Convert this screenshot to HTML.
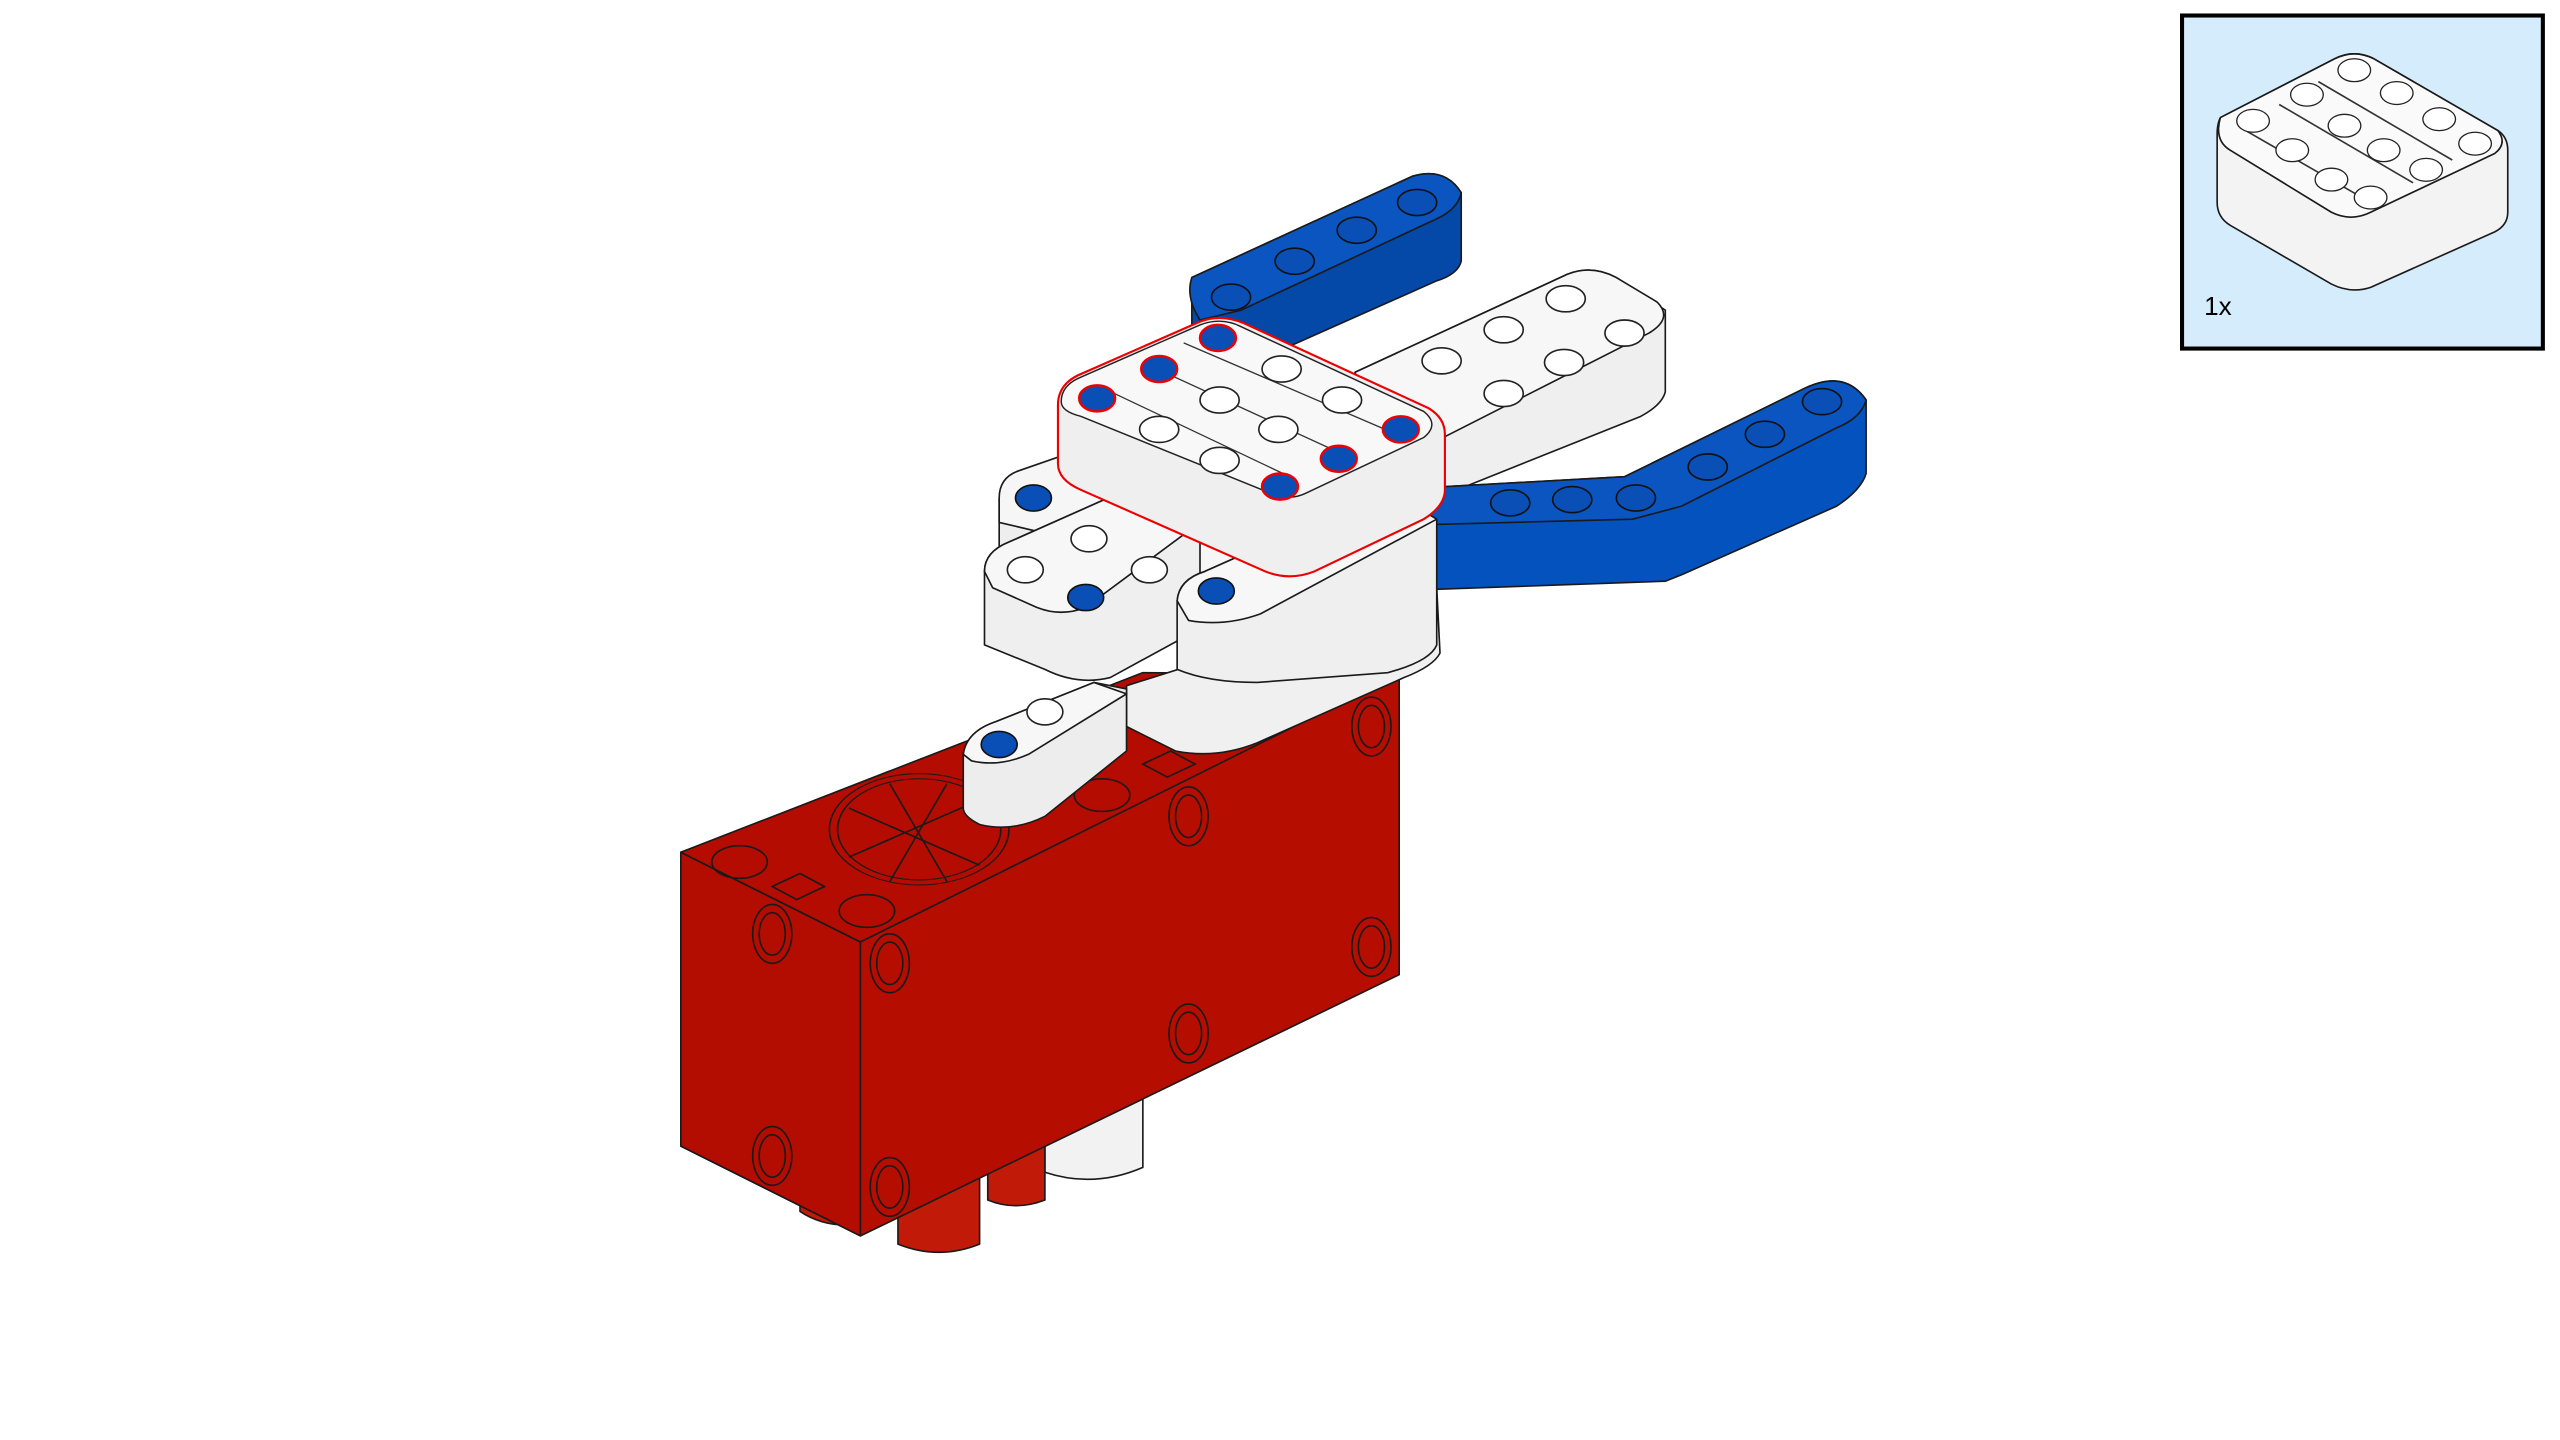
<!DOCTYPE html>
<html><head><meta charset="utf-8"><style>
html,body{margin:0;padding:0;background:#fff;width:2560px;height:1440px;overflow:hidden}
svg{display:block}
.o{stroke:#1a1a1a;stroke-width:1;stroke-linejoin:round}
</style></head><body>
<svg width="2560" height="1440" viewBox="0 0 1568 882" xmlns="http://www.w3.org/2000/svg">
<rect x="1336.5" y="9.5" width="221" height="204" fill="#d5ecfc" stroke="#000" stroke-width="2.5"/>
<g class="o" stroke-width="0.8">
<path d="M1360,72 L1430,36 Q1442,30 1454,36 L1530,80 Q1536,84 1536,92 L1536,130 Q1536,138 1528,142 L1452,176 Q1440,180 1428,174 L1366,138 Q1358,133 1358,124 L1358,82 Q1358,76 1360,72Z" fill="#f3f3f3"/>
<path d="M1360,72 L1430,36 Q1442,30 1454,36 L1530,80 Q1536,88 1528,94 L1452,130 Q1440,136 1428,130 L1366,92 Q1356,86 1360,72Z" fill="#fafafa"/>
<line x1="1372" y1="78" x2="1452" y2="124" stroke="#333"/><line x1="1396" y1="64" x2="1478" y2="112" stroke="#333"/><line x1="1420" y1="50" x2="1502" y2="98" stroke="#333"/>
</g>
<g fill="#fff" stroke="#222" stroke-width="0.8">
<ellipse cx="1442" cy="43" rx="10" ry="7"/><ellipse cx="1413" cy="58" rx="10" ry="7"/><ellipse cx="1380" cy="74" rx="10" ry="7"/>
<ellipse cx="1468" cy="57" rx="10" ry="7"/><ellipse cx="1436" cy="77" rx="10" ry="7"/><ellipse cx="1404" cy="92" rx="10" ry="7"/>
<ellipse cx="1494" cy="73" rx="10" ry="7"/><ellipse cx="1460" cy="92" rx="10" ry="7"/><ellipse cx="1428" cy="110" rx="10" ry="7"/>
<ellipse cx="1516" cy="88" rx="10" ry="7"/><ellipse cx="1486" cy="104" rx="10" ry="7"/><ellipse cx="1452" cy="121" rx="10" ry="7"/>
</g>
<text x="1350" y="193" font-family="Liberation Sans, sans-serif" font-size="16" fill="#000">1x</text>

<g class="o">
<path d="M730,170 L865,108 Q885,102 895,118 L895,160 Q893,168 880,172 L790,212 L760,222 L730,208Z" fill="#0448a8"/>
<path d="M730,170 L865,108 Q885,102 895,118 Q893,128 880,134 L760,190 L735,196 Q726,182 730,170Z" fill="#0a55c0"/>
</g>
<g fill="#0a4fb5" stroke="#111" stroke-width="1"><ellipse cx="754" cy="182" rx="12" ry="8"/><ellipse cx="793" cy="160" rx="12" ry="8"/><ellipse cx="831" cy="141" rx="12" ry="8"/><ellipse cx="868" cy="124" rx="12" ry="8"/></g>

<g class="o">
<path d="M830,228 L960,168 Q975,162 990,170 L1020,190 L1020,240 Q1018,248 1005,255 L880,305 L840,300Z" fill="#efefef"/>
<path d="M830,228 L960,168 Q975,162 990,170 L1015,185 Q1025,195 1010,204 L880,270 L840,262Z" fill="#f7f7f7"/>
</g>
<g fill="#fff" stroke="#222" stroke-width="1"><ellipse cx="959" cy="183" rx="12" ry="8"/><ellipse cx="921" cy="202" rx="12" ry="8"/><ellipse cx="883" cy="221" rx="12" ry="8"/><ellipse cx="995" cy="204" rx="12" ry="8"/><ellipse cx="958" cy="222" rx="12" ry="8"/><ellipse cx="921" cy="241" rx="12" ry="8"/></g>

<g class="o">
<path d="M850,300 L995,292 L1105,238 Q1130,226 1143,245 L1143,290 Q1140,300 1125,310 L1030,352 L1020,356 L850,362Z" fill="#0452bd"/>
<path d="M850,300 L995,292 L1105,238 Q1130,226 1143,245 Q1140,256 1125,262 L1030,310 L1000,318 L850,322Z" fill="#0a55c0"/>
</g>
<g fill="#0a4fb5" stroke="#111" stroke-width="1"><ellipse cx="1116" cy="246" rx="12" ry="8"/><ellipse cx="1081" cy="266" rx="12" ry="8"/><ellipse cx="1046" cy="286" rx="12" ry="8"/><ellipse cx="1002" cy="305" rx="12" ry="8"/><ellipse cx="963" cy="306" rx="12" ry="8"/><ellipse cx="925" cy="308" rx="12" ry="8"/></g>

<!-- pegs (behind block) -->
<g class="o">
<path d="M640,660 L700,652 L700,715 Q670,728 640,718Z" fill="#f2f2f2"/>
<path d="M550,715 L600,715 L600,762 Q575,772 550,762Z" fill="#c21a08"/>
<path d="M605,700 L640,692 L640,735 Q622,742 605,735Z" fill="#c21a08"/>
<path d="M490,720 L525,730 L525,750 Q505,752 490,742Z" fill="#c21a08"/>
</g>

<g class="o">
<path d="M417,522 L740,405 L857,413 L857,597 L527,757 L417,702Z" fill="#b50d00"/>
<path d="M417,522 L527,577 L527,757 L417,702Z" fill="#b30c00"/>
<path d="M417,522 L700,412 L857,413 L527,577Z" fill="#b40c00"/>
</g>
<g fill="none" stroke="#1a1a1a" stroke-width="1">
<circle cx="563" cy="508" r="55" transform="matrix(1,0,0,0.62,0,193)"/>
<circle cx="563" cy="508" r="50" transform="matrix(1,0,0,0.62,0,193)"/>
<path d="M520,495 L600,530 M520,525 L600,490 M545,480 L580,540 M545,540 L580,480"/>
<ellipse cx="453" cy="528" rx="17" ry="10"/><ellipse cx="531" cy="558" rx="17" ry="10"/><ellipse cx="675" cy="487" rx="17" ry="10"/>
<path d="M473,543 L490,535 L505,543 L488,551Z"/><path d="M700,468 L717,460 L732,468 L715,476Z"/>
<ellipse cx="473" cy="572" rx="12" ry="18"/><ellipse cx="473" cy="572" rx="8" ry="13"/>
<ellipse cx="545" cy="590" rx="12" ry="18"/><ellipse cx="545" cy="590" rx="8" ry="13"/>
<ellipse cx="473" cy="708" rx="12" ry="18"/><ellipse cx="473" cy="708" rx="8" ry="13"/>
<ellipse cx="545" cy="727" rx="12" ry="18"/><ellipse cx="545" cy="727" rx="8" ry="13"/>
<ellipse cx="728" cy="500" rx="12" ry="18"/><ellipse cx="728" cy="500" rx="8" ry="13"/>
<ellipse cx="728" cy="633" rx="12" ry="18"/><ellipse cx="728" cy="633" rx="8" ry="13"/>
<ellipse cx="840" cy="445" rx="12" ry="18"/><ellipse cx="840" cy="445" rx="8" ry="13"/>
<ellipse cx="840" cy="580" rx="12" ry="18"/><ellipse cx="840" cy="580" rx="8" ry="13"/>
</g>

<g class="o">
<path d="M690,420 L880,360 L882,400 Q878,408 860,415 L770,455 Q745,465 720,460 L690,445Z" fill="#f0f0f0"/>
</g>
<g class="o">
<path d="M612,305 L700,265 L850,335 L850,370 L760,395 L612,340Z" fill="#eeeeee"/>
<path d="M612,305 Q612,292 625,288 L700,262 L850,330 L760,360 Q720,345 612,320Z" fill="#f6f6f6"/>
</g>
<g fill="#0a4fb5" stroke="#111"><ellipse cx="633" cy="305" rx="11" ry="8"/></g>
<g class="o">
<path d="M603,350 Q603,338 618,332 L690,300 L735,320 L735,385 L680,415 Q660,420 640,410 L603,395Z" fill="#efefef"/>
<path d="M603,350 Q603,338 618,332 L690,300 L735,320 L665,372 Q650,378 635,372 L608,360Z" fill="#f7f7f7"/>
</g>
<g fill="#fff" stroke="#222"><ellipse cx="628" cy="349" rx="11" ry="8"/><ellipse cx="667" cy="330" rx="11" ry="8"/><ellipse cx="704" cy="349" rx="11" ry="8"/></g>
<g fill="#0a4fb5" stroke="#111"><ellipse cx="665" cy="366" rx="11" ry="8"/></g>
<g class="o">
<path d="M721,368 Q722,355 738,350 L850,300 L880,318 L880,395 Q876,405 850,412 L770,418 Q740,418 721,410Z" fill="#efefef"/>
<path d="M721,368 Q722,355 738,350 L850,300 L880,318 L772,376 Q750,384 728,380Z" fill="#f7f7f7"/>
</g>
<g fill="#0a4fb5" stroke="#111"><ellipse cx="745" cy="362" rx="11" ry="8"/></g>

<g class="o">
<path d="M590,462 Q592,448 610,442 L670,418 L690,422 L690,460 L640,500 Q620,510 600,505 Q590,500 590,495Z" fill="#ededed"/>
<path d="M590,462 Q592,448 610,442 L670,418 L690,425 L630,462 Q612,470 595,466Z" fill="#f7f7f7"/>
</g>
<g fill="#fff" stroke="#222"><ellipse cx="640" cy="436" rx="11" ry="8"/></g>
<g fill="#0a4fb5" stroke="#111"><ellipse cx="612" cy="456" rx="11" ry="8"/></g>

<g>
<path d="M648,248 Q648,236 660,230 L735,197 Q748,192 762,198 L875,250 Q885,256 885,266 L885,300 Q885,310 872,318 L805,350 Q790,356 775,350 L662,300 Q648,294 648,284Z" fill="#efefef" stroke="#e00" stroke-width="1.3"/>
<path d="M650,246 Q650,236 662,231 L735,199 Q748,194 760,200 L872,252 Q882,260 872,268 L800,302 Q790,307 778,302 L662,255 Q650,252 650,246Z" fill="#f8f8f8" stroke="#222" stroke-width="0.9"/>
<path d="M672,236 L790,292 M700,222 L822,278 M725,210 L853,265" stroke="#333" stroke-width="0.8"/>
</g>
<g fill="#fff" stroke="#222"><ellipse cx="747" cy="245" rx="12" ry="8"/><ellipse cx="710" cy="263" rx="12" ry="8"/><ellipse cx="785" cy="226" rx="12" ry="8"/><ellipse cx="822" cy="245" rx="12" ry="8"/><ellipse cx="783" cy="263" rx="12" ry="8"/><ellipse cx="747" cy="282" rx="12" ry="8"/></g>
<g fill="#0a4fb5" stroke="#e00" stroke-width="1.5"><ellipse cx="672" cy="244" rx="11" ry="8"/><ellipse cx="710" cy="226" rx="11" ry="8"/><ellipse cx="746" cy="207" rx="11" ry="8"/><ellipse cx="858" cy="263" rx="11" ry="8"/><ellipse cx="820" cy="281" rx="11" ry="8"/><ellipse cx="784" cy="298" rx="11" ry="8"/></g>
</svg>
</body></html>
